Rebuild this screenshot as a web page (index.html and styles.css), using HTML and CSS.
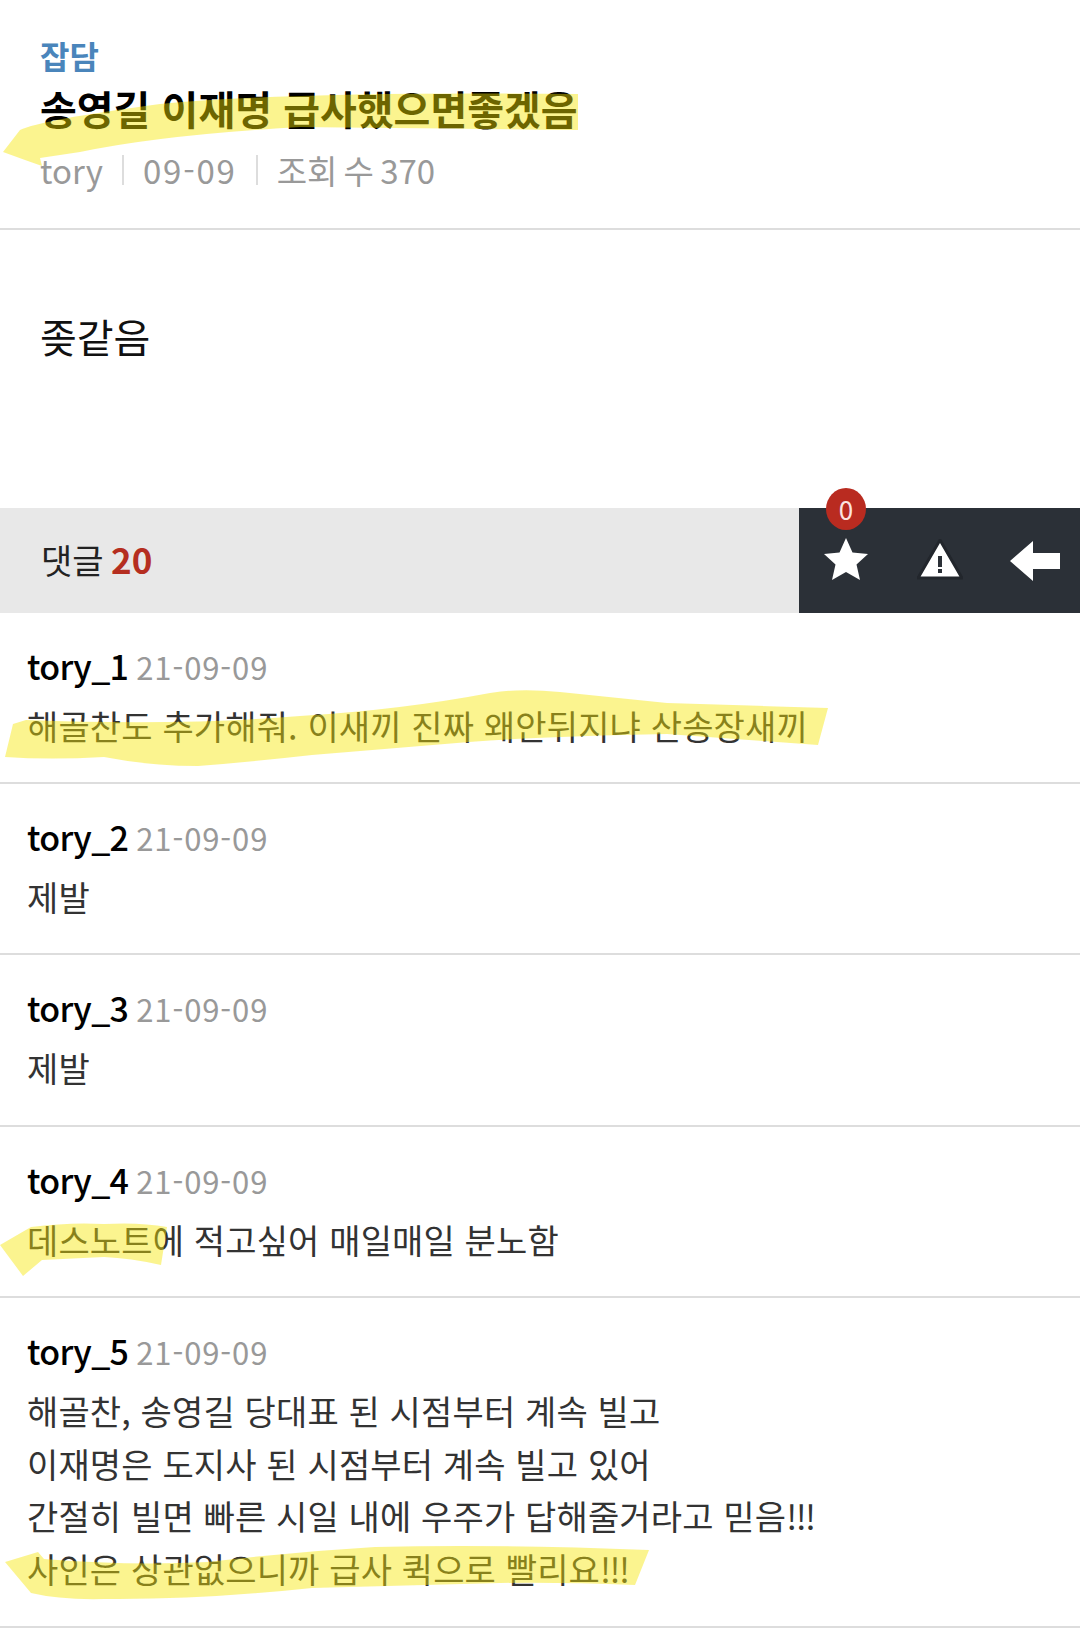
FILE: index.html

```html
<!DOCTYPE html>
<html lang="ko">
<head>
    <meta charset="UTF-8">
    <meta name="viewport" content="width=device-width, initial-scale=1.0">
    <title>잡담 - 송영길 이재명 급사했으면좋겠음</title>
    <link rel="stylesheet" href="styles.css">
</head>
<body>
    <div class="page">
        <header class="post-head">
            <div class="category">잡담</div>
            <h1 class="post-title">송영길 이재명 급사했으면좋겠음</h1>
            <div class="post-meta">
                <span>tory</span>
                <span class="sep"></span>
                <span class="day">09-09</span>
                <span class="sep"></span>
                <span class="views">조회 수 370</span>
            </div>
        </header>

        <div class="post-body">좆같음</div>

        <div class="comment-bar">
            <div class="comment-count">댓글 <b>20</b></div>
            <div class="actions">
                <div class="action star">
                    <span class="badge">0</span>
                    <svg width="46" height="44" viewBox="0 0 46 44"><path d="M23 1 L29.5 15.5 L45 17 L33.5 27.5 L37 43 L23 35 L9 43 L12.5 27.5 L1 17 L16.500 15.500 Z" fill="#fff"/></svg>
                </div>
                <div class="action warn">
                    <svg width="46" height="42" viewBox="0 0 46 42"><path d="M23 4 L43 38 L3 38 Z" fill="#fff" stroke="#fff" stroke-width="3" stroke-linejoin="round"/><path d="M23 1 L45 39 L1 39 Z" fill="none" stroke="#22262c" stroke-width="3" stroke-linejoin="round"/><rect x="21" y="17" width="4" height="11" fill="#2b3037"/><rect x="21" y="30" width="4" height="4" fill="#2b3037"/></svg>
                </div>
                <div class="action back">
                    <svg width="50" height="40" viewBox="0 0 50 40"><path d="M0 20 L23 0 L23 12 L50 12 L50 28 L23 28 L23 40 Z" fill="#fff"/></svg>
                </div>
            </div>
        </div>

        <ul class="comments">
            <li class="comment">
                <div class="comment-head"><span class="name">tory_1</span><span class="date">21-09-09</span></div>
                <p>해골찬도 추가해줘. 이새끼 진짜 왜안뒤지냐 산송장새끼</p>
            </li>
            <li class="comment">
                <div class="comment-head"><span class="name">tory_2</span><span class="date">21-09-09</span></div>
                <p>제발</p>
            </li>
            <li class="comment">
                <div class="comment-head"><span class="name">tory_3</span><span class="date">21-09-09</span></div>
                <p>제발</p>
            </li>
            <li class="comment">
                <div class="comment-head"><span class="name">tory_4</span><span class="date">21-09-09</span></div>
                <p>데스노트에 적고싶어 매일매일 분노함</p>
            </li>
            <li class="comment">
                <div class="comment-head"><span class="name">tory_5</span><span class="date">21-09-09</span></div>
                <p>해골찬, 송영길 당대표 된 시점부터 계속 빌고<br>이재명은 도지사 된 시점부터 계속 빌고 있어<br>간절히 빌면 빠른 시일 내에 우주가 답해줄거라고 믿음<span class="bang">!!!</span><br>사인은 상관없으니까 급사 퀵으로 빨리요<span class="bang">!!!</span></p>
            </li>
        </ul>

        <!-- highlighter marks drawn over the screenshot -->
        <svg class="marks" width="1080" height="1633" viewBox="0 0 1080 1633">
            <path d="M3 152 L20 130 Q40 120 160 104 Q300 91 578 94 L578 130 Q400 128 300 127 Q160 135 80 152 L40 158 L42 166 L25 160 Z"/>
            <path d="M5 757 L13 724 L26 720 Q180 726 300 716 Q400 710 490 693 Q520 688 560 692 L667 703 L828 708 L818 745 L667 734 Q550 736 469 742 L312 755 Q250 762 198 766 Q150 766 104 757 Q50 760 5 757 Z"/>
            <path d="M0 1245 L31 1227 Q70 1222 104 1224 Q140 1222 167 1227 L161 1265 Q130 1258 104 1257 L42 1260 L23 1276 Z"/>
            <path d="M5 1562 L38 1552 L44 1559 Q130 1566 208 1562 Q290 1552 375 1547 Q500 1544 649 1550 L635 1585 Q560 1582 500 1583 L312 1588 Q200 1600 104 1599 Q60 1600 31 1593 Z"/>
        </svg>
    </div>
</body>
</html>
```

FILE: styles.css

```css
* {
    box-sizing: border-box;
}
body {
    margin: 0;
    background-color: #fff;
    font-family: "Noto Sans CJK KR", "Noto Sans", sans-serif;
    color: #333;
}
.page {
    position: relative;
    width: 1080px;
    height: 1633px;
    overflow: hidden;
}
.post-head {
    height: 230px;
    padding: 32px 40px 0;
    border-bottom: 2px solid #ddd;
}
.category {
    font-size: 32px;
    line-height: 46px;
    font-weight: 700;
    color: #4a85bb;
}
.post-title {
    margin: 0;
    font-size: 40px;
    line-height: 60px;
    font-weight: 700;
    color: #000;
}
.post-meta {
    display: flex;
    align-items: center;
    gap: 19px;
    margin-top: 9px;
    font-size: 33px;
    line-height: 46px;
    color: #999;
}
.day {
    letter-spacing: 1.8px;
}
.views {
    word-spacing: -3px;
}
.sep {
    width: 2px;
    height: 30px;
    background-color: #ddd;
}
.post-body {
    height: 278px;
    padding: 77px 40px 0;
    font-size: 40px;
    line-height: 58px;
    color: #111;
}
.comment-bar {
    display: flex;
    height: 105px;
    background-color: #e8e8e8;
}
.comment-count {
    flex: 1;
    padding-left: 41px;
    font-size: 34px;
    line-height: 102px;
    color: #222;
}
.comment-count b {
    margin-left: -2px;
    font-size: 35px;
    color: #b52e20;
}
.actions {
    display: flex;
    width: 281px;
    background-color: #2b3037;
}
.action {
    position: relative;
    display: flex;
    flex: 1;
    align-items: center;
    justify-content: center;
}
.star {
    padding: 0 0 3px 2px;
}
.warn {
    padding: 0 0 1px 5px;
}
.back {
    padding-left: 6px;
}
.badge {
    position: absolute;
    top: -20px;
    left: 27px;
    width: 40px;
    height: 42px;
    border-radius: 50%;
    background-color: #b92b20;
    color: #fbe4e0;
    font-size: 26px;
    line-height: 42px;
    text-align: center;
}
.comments {
    margin: 0;
    padding: 0;
    list-style: none;
}
.comment {
    padding: 28px 27px 0;
    height: 171.2px;
    border-bottom: 2px solid #ddd;
}
.comment:last-child {
    height: 330px;
}
.comment-head {
    display: flex;
    align-items: baseline;
    gap: 8px;
    height: 50px;
}
.name {
    font-size: 34px;
    line-height: 50px;
    font-weight: 500;
    letter-spacing: -0.7px;
    color: #000;
}
.date {
    font-size: 31px;
    line-height: 50px;
    letter-spacing: 0.9px;
    color: #999;
}
.comment p {
    margin: 9px 0 0;
    font-size: 34px;
    line-height: 52.8px;
    letter-spacing: 0.15px;
    color: #333;
}
.bang {
    letter-spacing: -1.5px;
}
.marks {
    position: absolute;
    top: 0;
    left: 0;
    fill: #f6e600;
    fill-opacity: 0.44;
    filter: blur(0.6px);
    pointer-events: none;
}
```
